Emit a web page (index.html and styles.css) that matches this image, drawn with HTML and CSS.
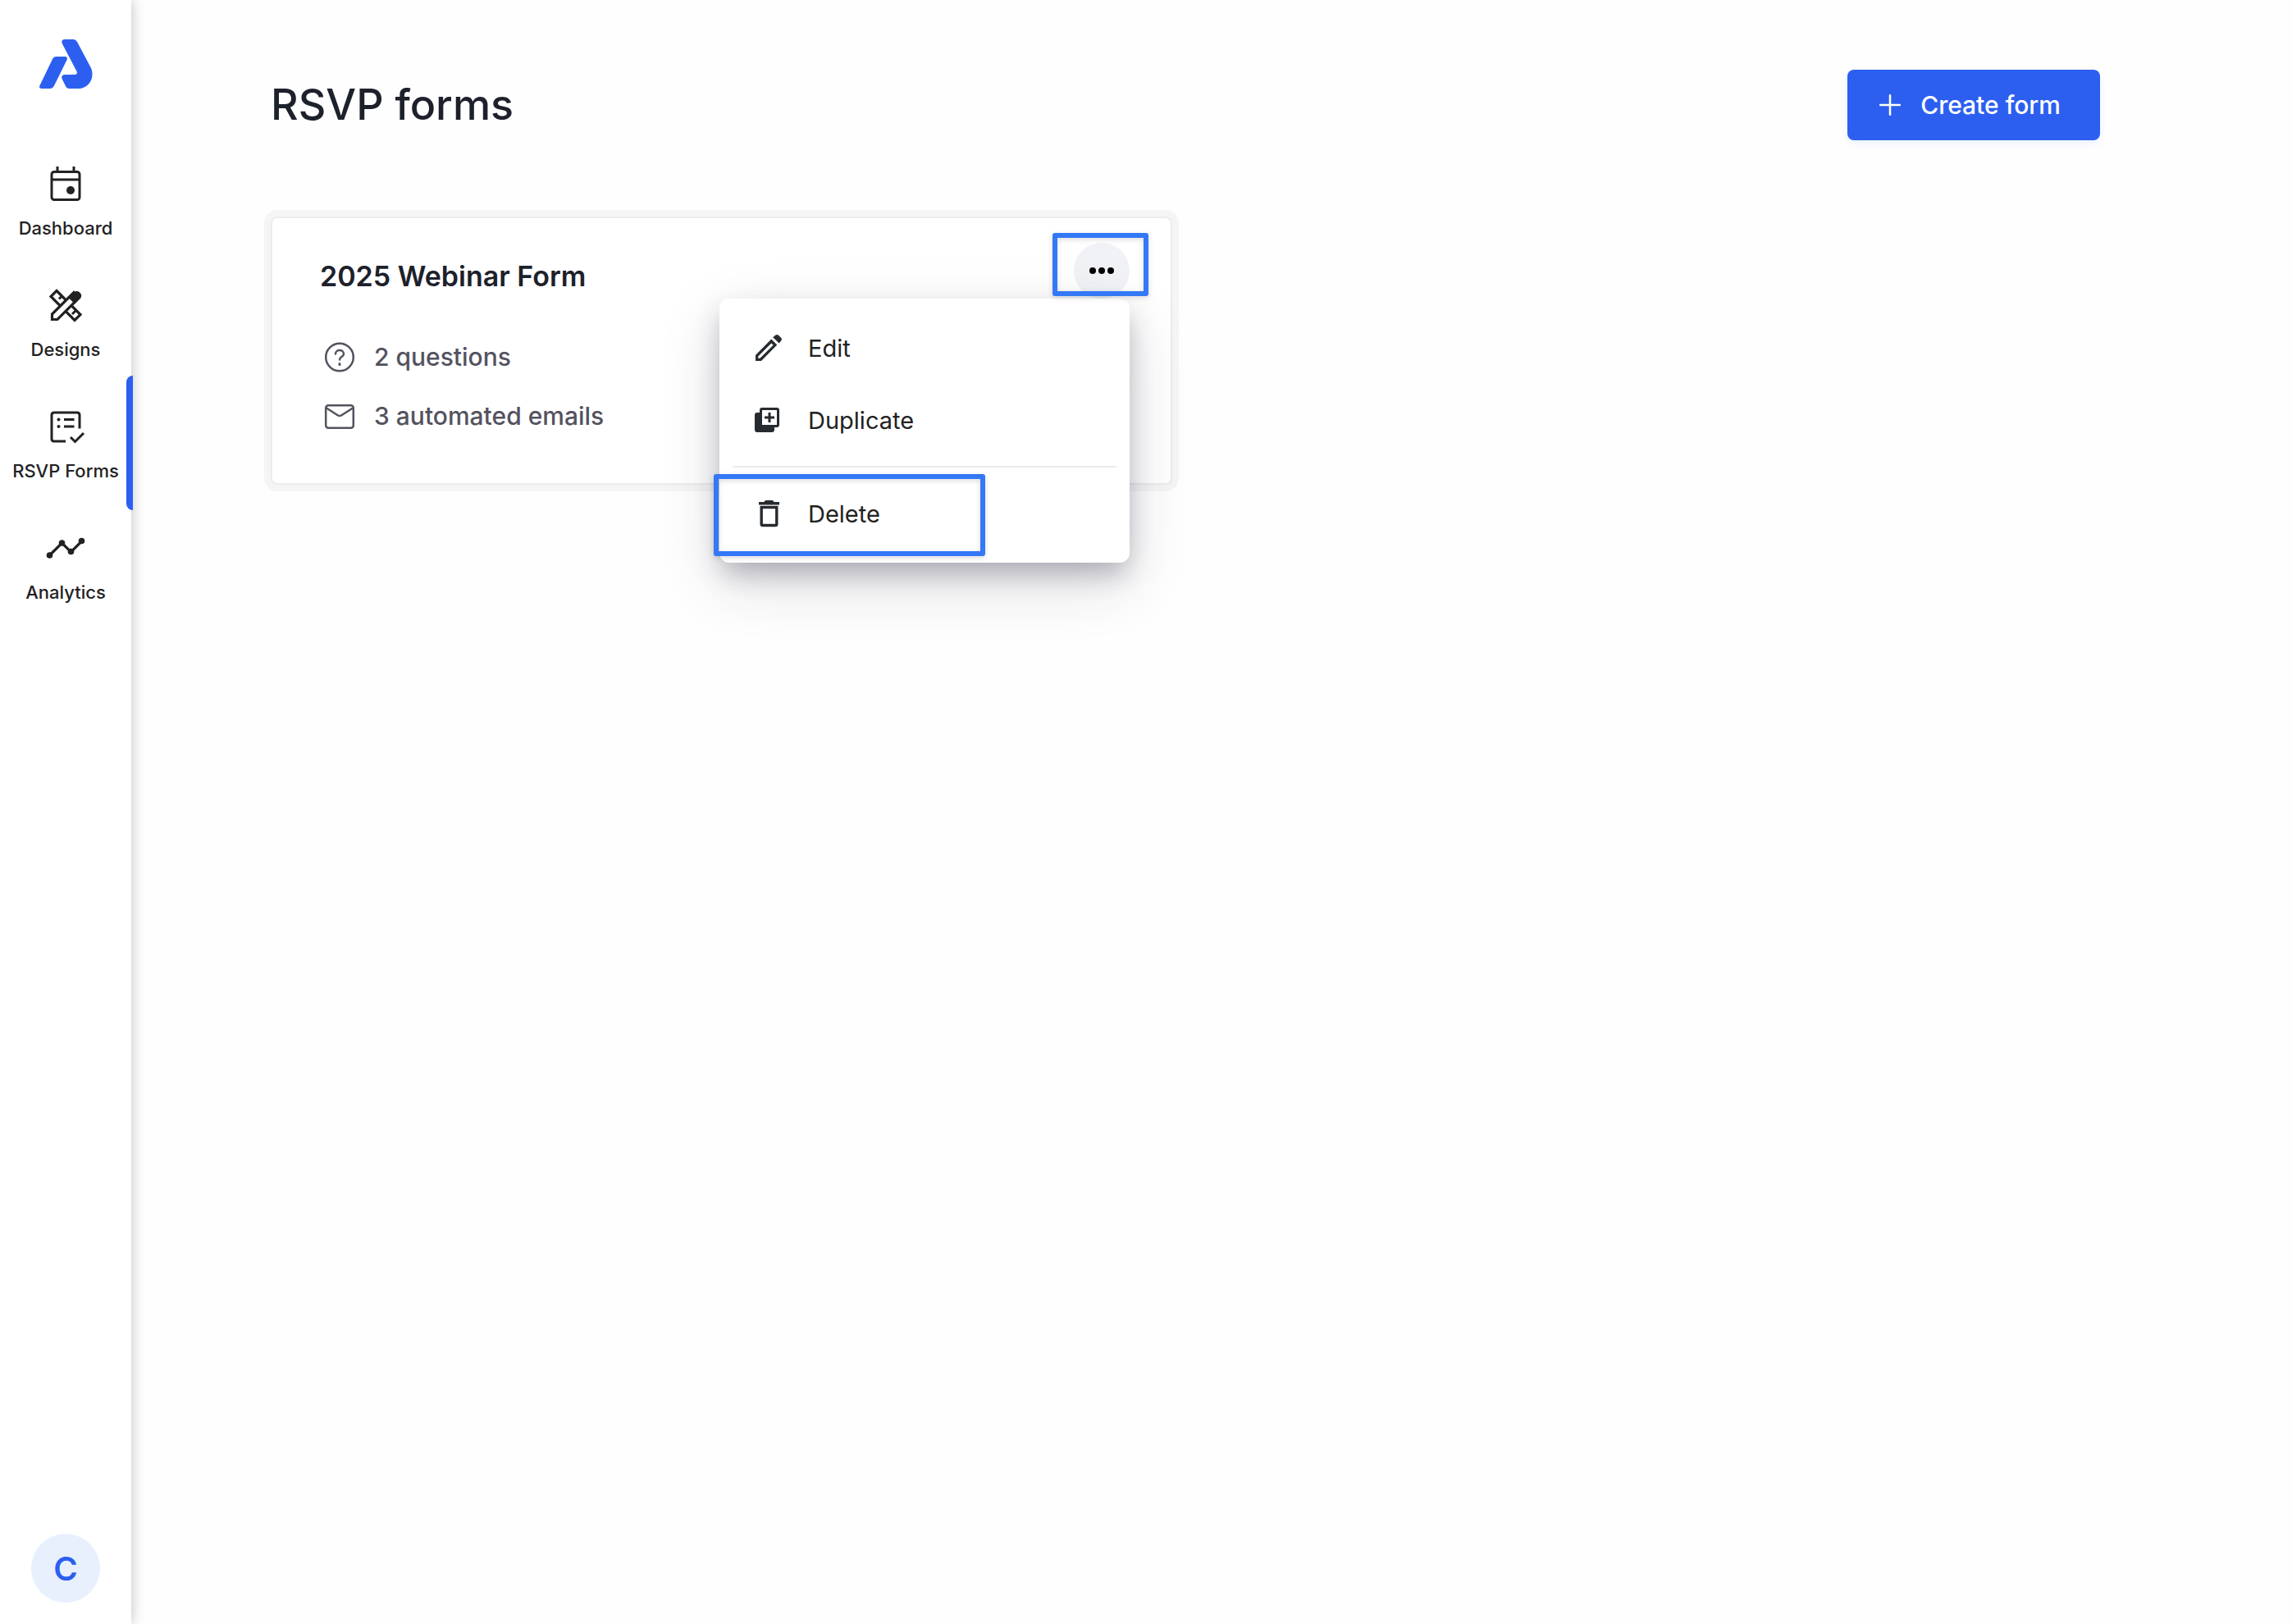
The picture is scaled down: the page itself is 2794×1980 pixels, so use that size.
FILE: index.html
```html
<!DOCTYPE html>
<html lang="en">
    <head>
        <meta charset="utf-8">
        <meta name="viewport" content="width=device-width, initial-scale=1">
        <title>RSVP forms</title>
        <link rel="stylesheet" href="styles.css">
    </head>
    <body>
        <div class="site-container">
            <aside class="sidebar">
                <a class="logo" href="#" aria-label="Home">
                    <svg width="66" height="60" viewBox="0 0 66 60" fill="#2c5ff0">
                        <path d="M21.500 21H32.500Q36 21 34.500 25L19.500 55.500Q17.500 60 13.500 60H4Q-0.200 60 1.600 56L17 24Q18.500 21 21.500 21Z"/>
                        <path d="M32 0H42.500Q45.300 0 47 3L63.500 34C69.500 46 61.500 60 48.500 60H37.500Q34.200 60 33 57L29 49Q26.500 43 32.500 43H44Q48.100 42.600 46.500 39L29 5.500Q26.800 0 32 0Z"/>
                    </svg>
                </a>
                <nav class="menu">
                    <a href="#">
                        <svg viewBox="0 0 48 48" fill="none" stroke="#222" stroke-width="3">
                            <rect x="7" y="8.500" width="34" height="34" rx="3"/>
                            <path d="M7 18h34M14 2v6M34 2v6"/>
                            <circle cx="30" cy="31" r="5" fill="#222" stroke="none"/>
                        </svg>
                        Dashboard
                    </a>
                    <a href="#">
                        <svg viewBox="0 0 48 48" fill="none" stroke="#222" stroke-width="3.200">
                            <path d="M13 5.500L42 34.500 35 41.500 6 12.500Z"/>
                            <path d="M16 15.500l4-4M32 34l4-4" stroke-width="3"/>
                            <path d="M7.500 40.500V34L34 7.500l6.500 6.500L14 40.500Z" fill="#fff"/>
                            <path d="M27.500 14l7-7q3-2 6 0l1.500 1.500q2.500 3 0 6l-7 7Z" fill="#222" stroke="none"/>
                        </svg>
                        Designs
                    </a>
                    <a class="active" href="#">
                        <svg viewBox="0 0 48 48" fill="none" stroke="#222" stroke-width="3">
                            <path d="M24 41H10Q7 41 7 38V9Q7 6 10 6H38Q41 6 41 9V25.500M22 14.500h12.500M22 23h12.500M30 36l5.500 5.500L46 31"/>
                            <circle cx="15.500" cy="14.500" r="2" fill="#222" stroke="none"/>
                            <circle cx="15.500" cy="23" r="2" fill="#222" stroke="none"/>
                        </svg>
                        RSVP Forms
                    </a>
                    <a href="#">
                        <svg viewBox="0 0 48 48" fill="#222">
                            <path d="M4.500 32L19.500 17 30.500 28 43.500 15" fill="none" stroke="#222" stroke-width="3.200"/>
                            <circle cx="4.500" cy="32" r="3.800"/>
                            <circle cx="19.500" cy="17" r="3.800"/>
                            <circle cx="30.500" cy="27.500" r="3.800"/>
                            <circle cx="43.500" cy="14.500" r="3.800"/>
                        </svg>
                        Analytics
                    </a>
                </nav>
                <button class="avatar" type="button">C</button>
            </aside>

            <main class="content">
                <header class="page-header">
                    <h1>RSVP forms</h1>
                    <button class="create" type="button">
                        <svg width="26" height="26" viewBox="0 0 26 26" stroke="#fff" stroke-width="2.500" stroke-linecap="round">
                            <path d="M13 1.200V24.800M1.200 13H24.800"/>
                        </svg>
                        Create form
                    </button>
                </header>

                <div class="cards">
                    <article class="card">
                        <div class="card-head">
                            <h2>2025 Webinar Form</h2>
                            <button class="more marked" type="button" aria-label="More options">
                                <svg width="32" height="10" viewBox="0 0 32 10">
                                    <circle cx="5" cy="5" r="4"/>
                                    <circle cx="16" cy="5" r="4"/>
                                    <circle cx="27" cy="5" r="4"/>
                                </svg>
                            </button>
                        </div>
                        <ul class="details">
                            <li>
                                <svg viewBox="0 0 48 48" fill="none" stroke="#54525f" stroke-width="2.500" stroke-linecap="round">
                                    <circle cx="24" cy="24.500" r="16.800"/>
                                    <path d="M19 20.500C19 14.500 29 14.500 29 20.500C29 24 24 24 24 27.500"/>
                                    <path d="M24 32.500v1" stroke-width="3"/>
                                </svg>
                                2 questions
                            </li>
                            <li>
                                <svg viewBox="0 0 48 48" fill="none" stroke="#54525f" stroke-width="2.500" stroke-linejoin="round">
                                    <rect x="7.200" y="11.200" width="33.600" height="27.600" rx="3"/>
                                    <path d="M8 14.500L22 23.500Q24 24.700 26 23.500L40 14.500"/>
                                </svg>
                                3 automated emails
                            </li>
                        </ul>

                        <!-- options menu -->
                        <div class="dropdown">
                            <button type="button">
                                <svg viewBox="0 0 48 48" fill="#262b2f">
                                    <path d="M8 33V40h7L34.300 20.500 27.300 13.500ZM13.500 36.800H11.200V34.500L27.300 18.400 29.600 20.700Z" fill-rule="evenodd"/>
                                    <path d="M29.200 11.300L32.500 8.600Q34.300 7.300 36 8.700L39.300 12Q40.700 13.700 39.400 15.300L36.700 18.600Z"/>
                                </svg>
                                Edit
                            </button>
                            <button type="button">
                                <svg viewBox="0 0 48 48" fill="#262b2f">
                                    <rect x="7" y="15" width="24" height="24" rx="3"/>
                                    <rect x="14.500" y="10.500" width="21" height="21" rx="1.500" fill="#fff" stroke="#262b2f" stroke-width="3"/>
                                    <path d="M25 15v12M19 21h12" stroke="#262b2f" stroke-width="3"/>
                                </svg>
                                Duplicate
                            </button>
                            <hr>
                            <button class="marked" type="button">
                                <svg viewBox="0 0 48 48" fill="#262b2f">
                                    <path d="M12 10H18.500Q19 8 21 8H28Q30 8 30.500 10H37V13.500H12Z"/>
                                    <path d="M15.200 16.500H33.800V37Q33.800 38.500 32.300 38.500H16.700Q15.200 38.500 15.200 37Z" fill="none" stroke="#262b2f" stroke-width="3.400"/>
                                </svg>
                                Delete
                            </button>
                        </div>
                    </article>
                </div>
            </main>
        </div>
    </body>
</html>
```
FILE: styles.css
```css
:root {
    --blue: #2c5ff0;
    --mark: #3478f6;
    --ink: #1d212b;
}

*, *::after {
    box-sizing: border-box;
}

html, body {
    height: 100%;
    margin: 0;
    padding: 0;
}

body, button {
    font-family: "Inter", sans-serif;
    color: #222;
}

button {
    border: none;
    background: none;
    padding: 0;
    cursor: pointer;
}

a {
    color: inherit;
    text-decoration: none;
}

.site-container {
    display: flex;
    min-height: 100%;
    background: #fefefe;
}

/* Sidebar */
.sidebar {
    width: 160px;
    flex-shrink: 0;
    display: flex;
    flex-direction: column;
    align-items: center;
    padding: 48px 0 26px;
    background: #fff;
    box-shadow: 0 0 16px rgba(0, 0, 0, 0.25);
}

.logo svg {
    display: block;
}

.menu {
    width: 100%;
    margin-top: 62px;
}

.menu a {
    position: relative;
    display: flex;
    flex-direction: column;
    align-items: center;
    gap: 13px;
    height: 148px;
    padding-top: 31px;
    font-size: 22px;
    line-height: 32px;
    font-weight: 500;
}

.menu svg, .details svg, .dropdown svg {
    width: 48px;
    height: 48px;
    flex-shrink: 0;
}

.menu a.active::after {
    content: "";
    position: absolute;
    top: -8px;
    bottom: -8px;
    right: -2px;
    width: 8px;
    border-radius: 8px 0 0 8px;
    background: var(--blue);
}

.avatar {
    width: 84px;
    height: 84px;
    margin-top: auto;
    border-radius: 50%;
    background: #e8f0fe;
    color: var(--blue);
    font-size: 40px;
    font-weight: 600;
}

/* Page */
.content {
    flex-grow: 1;
    padding: 85px 234px 85px 170px;
}

.page-header {
    display: flex;
    justify-content: space-between;
    align-items: center;
    margin-bottom: 93px;
}

h1 {
    margin: 0;
    font-size: 52px;
    line-height: 64px;
    font-weight: 500;
    color: var(--ink);
}

.create {
    display: flex;
    align-items: center;
    gap: 24px;
    height: 86px;
    padding: 0 48px 0 39px;
    border-radius: 8px;
    background: var(--blue);
    box-shadow: 0 4px 8px rgba(44, 95, 240, 0.08);
    color: #fff;
    font-size: 30px;
    font-weight: 500;
}

.cards {
    display: grid;
    grid-template-columns: 1fr 1fr;
    gap: 32px;
}

.card {
    position: relative;
    padding: 30px 50px 58px 58px;
    border: 2px solid #ececec;
    border-radius: 8px;
    background: #fff;
    box-shadow: 0 0 0 8px #f5f5f5;
}

.card-head {
    display: flex;
    justify-content: space-between;
    align-items: flex-end;
}

h2 {
    margin: 0;
    font-size: 34px;
    line-height: 54px;
    font-weight: 600;
    color: var(--ink);
}

.more {
    display: flex;
    justify-content: center;
    align-items: center;
    width: 68px;
    height: 68px;
    border-radius: 50%;
    background: #f1f2f6;
}

.details {
    display: flex;
    flex-direction: column;
    gap: 24px;
    margin: 47px 0 0;
    padding: 0;
    list-style: none;
}

.details li {
    display: flex;
    align-items: center;
    gap: 18px;
    font-size: 30px;
    line-height: 48px;
    font-weight: 500;
    color: #54525f;
}

/* Options menu */
.dropdown {
    position: absolute;
    top: 98px;
    right: 50px;
    width: 500px;
    padding: 16px 0;
    border-radius: 12px;
    background: #fff;
    box-shadow: 0 24px 72px rgba(40, 35, 60, 0.16), 0 16px 32px -4px rgba(40, 35, 60, 0.3);
}

.dropdown button {
    display: flex;
    align-items: center;
    gap: 24px;
    width: 100%;
    height: 88px;
    padding: 0 36px;
    font-size: 29px;
    font-weight: 400;
}

.dropdown hr {
    height: 2px;
    margin: 12px 16px;
    border: none;
    background: #ececec;
}

/* Blue frames round the controls to click */
.marked {
    position: relative;
}

.marked::after {
    content: "";
    position: absolute;
    z-index: 2;
    border: 6px solid var(--mark);
    border-radius: 3px;
    filter: drop-shadow(0 2px 3px rgba(0, 0, 0, 0.15));
}

.more.marked::after {
    top: -12px;
    right: -23px;
    bottom: 3px;
    left: -26px;
}

.dropdown .marked::after {
    top: -4px;
    bottom: -8px;
    left: -7px;
    width: 331px;
}
```
